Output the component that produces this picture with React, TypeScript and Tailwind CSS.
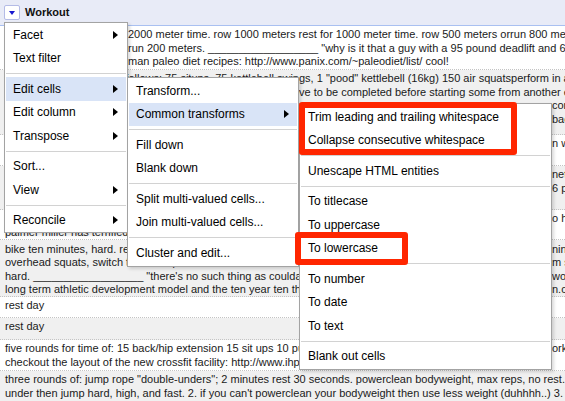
import React from "react";

type Line = { w?: string; a?: string; b?: string; end?: boolean; clip?: boolean };
type Row = { cls: string; lines: Line[] };

const U = "__________________";

const rows: Row[] = [
  {
    cls: "h-[44px] bg-white pt-[2px]",
    lines: [
      { w: "w-[123px]", clip: true, a: "row 2000 meters rest for ", b: "2000 meter time. row 1000 meters rest for 1000 meter time. row 500 meters orrun 800 meters" },
      { w: "w-[123px]", clip: true, a: "rest 60 seconds, then ", b: `run 200 meters. ${U} "why is it that a guy with a 95 pound deadlift and 6 pack abs` },
      { w: "w-[123px]", clip: true, a: "great site for cave", b: "man paleo diet recipes: http://www.panix.com/~paleodiet/list/ cool!" },
    ],
  },
  {
    cls: "h-[65px] bg-[#f0f0f0] pt-[2px]",
    lines: [
      { w: "w-[294px]", clip: true, end: true, a: "the work is as follows: 75 situps, 75 kettlebell swin", b: 'gs, 1 "pood" kettlebell (16kg) 150 air squatsperform in any order' },
      { w: "w-[294px]", clip: true, a: "each of the exercises ha", b: "ve to be completed before starting some from another exercise" },
      { w: "w-[547px]", a: "you may not split up the reps of one exercise and", b: "continue" },
      { w: "w-[547px]", a: "once you have finished one exercise you cannot go", b: "back" },
    ],
  },
  {
    cls: "h-[31px] bg-white pt-[2px]",
    lines: [
      { w: "w-[547px]", a: "push press 5-5-5-5-5 reps. post loads to comments. start", b: "n with" },
      { a: "rest three minutes between sets." },
    ],
  },
  {
    cls: "h-[44px] bg-[#f0f0f0] pt-[2px]",
    lines: [
      { w: "w-[547px]", a: "run 400 meters, 21 thrusters, 21 pull-ups, then run 800 meters", b: "net" },
      { w: "w-[547px]", a: "and finish with a 400 meter run for time. 95 pound thrusters, and", b: "6 pack" },
      { a: "post time to comments." },
    ],
  },
  {
    cls: "h-[30px] bg-white pt-[2px]",
    lines: [
      { w: "w-[547px]", a: "deadlift 1-1-1-1-1-1-1 reps. post loads to comments. remember", b: "o hit" },
      { a: "palmer miller has terrified me with his deadlift" },
    ],
  },
  {
    cls: "h-[57px] bg-[#f0f0f0] pt-[2.5px]",
    lines: [
      { w: "w-[547px]", a: "bike ten minutes, hard. rest ten minutes. run one mile, hard. rest ten minutes. then", b: "ning" },
      { w: "w-[547px]", a: "overhead squats, switch to front squats after the first round and", b: "m squats" },
      { w: "w-[547px]", a: `hard. ${U} "there's no such thing as coulda, shoulda, woulda" - read about the`, b: " workout" },
      { w: "w-[547px]", a: "long term athletic development model and the ten year ten thousand hour rule at", b: "n.com" },
    ],
  },
  { cls: "h-[21px] bg-white pt-[2px]", lines: [{ b: "rest day" }] },
  { cls: "h-[22px] bg-[#f0f0f0] pt-[2px]", lines: [{ b: "rest day" }] },
  {
    cls: "h-[31px] bg-white pt-[2px]",
    lines: [
      { w: "w-[547px]", a: "five rounds for time of: 15 back/hip extension 15 sit ups 10 pull ups 10 push ups post time", b: "orkout" },
      { b: "checkout the layout of the new crossfit facility: http://www.ihpcrossfit.com/" },
    ],
  },
  {
    cls: "h-[40px] bg-[#f0f0f0] pt-[2px]",
    lines: [
      { b: 'three rounds of: jump rope "double-unders"; 2 minutes rest 30 seconds. powerclean bodyweight, max reps, no rest.' },
      { b: "under then jump hard, high, and fast. 2. if you can't powerclean your bodyweight then use less weight (duhhhh..) 3. rest" },
    ],
  },
];

type Item = { t: string; sub?: boolean; hl?: boolean } | "sep";

const mainMenu: Item[] = [
  { t: "Facet", sub: true },
  { t: "Text filter" },
  "sep",
  { t: "Edit cells", sub: true, hl: true },
  { t: "Edit column", sub: true },
  { t: "Transpose", sub: true },
  "sep",
  { t: "Sort..." },
  { t: "View", sub: true },
  "sep",
  { t: "Reconcile", sub: true },
];

const editMenu: Item[] = [
  { t: "Transform..." },
  { t: "Common transforms", sub: true, hl: true },
  "sep",
  { t: "Fill down" },
  { t: "Blank down" },
  "sep",
  { t: "Split multi-valued cells..." },
  { t: "Join multi-valued cells..." },
  "sep",
  { t: "Cluster and edit..." },
];

const commonMenu: Item[] = [
  { t: "Trim leading and trailing whitespace" },
  { t: "Collapse consecutive whitespace" },
  "sep",
  { t: "Unescape HTML entities" },
  "sep",
  { t: "To titlecase" },
  { t: "To uppercase" },
  { t: "To lowercase" },
  "sep",
  { t: "To number" },
  { t: "To date" },
  { t: "To text" },
  "sep",
  { t: "Blank out cells" },
];

function Arrow() {
  return <span className="w-0 h-0 border-y-[4px] border-y-transparent border-l-[5px] border-l-black" />;
}

function MenuItems({ items }: { items: Item[] }) {
  return (
    <>
      {items.map((it, i) =>
        it === "sep" ? (
          <div key={i} className="h-[7px] flex items-center">
            <div className="h-px w-full bg-[#d2d2d2]" />
          </div>
        ) : (
          <div
            key={i}
            className={`h-[23.5px] flex items-center justify-between pl-[7px] pr-[8px] text-[12px] text-black whitespace-nowrap ${
              it.hl ? "bg-[#d9e4f7]" : ""
            }`}
          >
            <span>{it.t}</span>
            {it.sub ? <Arrow /> : null}
          </div>
        )
      )}
    </>
  );
}

export default function App() {
  return (
    <div className="relative w-[565px] h-[401px] overflow-hidden bg-white font-['Liberation_Sans',Arial,sans-serif]">
      {/* column header */}
      <div className="h-[26px] bg-[#e8ebf7] border-b border-[#a9c0f1] flex items-center pl-[4px] gap-[5px]">
        <div className="w-[16px] h-[15px] bg-white border border-[#b4bbe6] rounded-[2px] flex items-center justify-center">
          <span className="w-0 h-0 border-x-[3.5px] border-x-transparent border-t-[4px] border-t-[#1717d0]" />
        </div>
        <span className="text-[11px] font-bold text-[#111]">Workout</span>
      </div>

      {/* data rows */}
      <div className="flex flex-col">
        {rows.map((r, i) => (
          <div
            key={i}
            className={`${r.cls} shrink-0 overflow-hidden border-b border-dotted border-[#c4c4c4] pl-[5px] text-[11px] text-[#1a1a1a]`}
          >
            {r.lines.map((l, j) => (
              <div key={j} className="flex items-start h-[13.5px] leading-[13.5px] whitespace-nowrap">
                {l.w ? (
                  <div
                    className={`${l.w} shrink-0 flex ${l.clip ? "h-[16px] overflow-hidden" : ""} ${
                      l.end ? "justify-end" : "justify-start"
                    }`}
                  >
                    <span className="shrink-0">{l.a}</span>
                  </div>
                ) : l.a ? (
                  <span className="shrink-0">{l.a}</span>
                ) : null}
                {l.b ? <span className="shrink-0">{l.b}</span> : null}
              </div>
            ))}
          </div>
        ))}
      </div>

      {/* main column menu */}
      <div className="absolute left-[4px] top-[22px] w-[124px] bg-white border border-[#a3a3a3] px-[1px] shadow-[2px_2px_3px_rgba(0,0,0,0.15)]">
        <MenuItems items={mainMenu} />
      </div>

      {/* edit cells submenu */}
      <div className="absolute left-[127px] top-[77px] w-[172px] bg-white border border-[#a3a3a3] px-[1px] py-[1px] shadow-[2px_2px_3px_rgba(0,0,0,0.15)]">
        <MenuItems items={editMenu} />
      </div>

      {/* common transforms submenu */}
      <div className="absolute left-[299px] top-[103px] w-[253px] bg-white border border-[#a3a3a3] px-[1px] py-[1px] shadow-[2px_2px_3px_rgba(0,0,0,0.15)]">
        <MenuItems items={commonMenu} />
      </div>

      {/* red annotation boxes */}
      <div className="absolute left-[299px] top-[102px] w-[218px] h-[53px] border-[6px] border-[#ff2600] rounded-[3px]" />
      <div className="absolute left-[295px] top-[232px] w-[113px] h-[33px] border-[6px] border-[#ff2600] rounded-[3px]" />
    </div>
  );
}
